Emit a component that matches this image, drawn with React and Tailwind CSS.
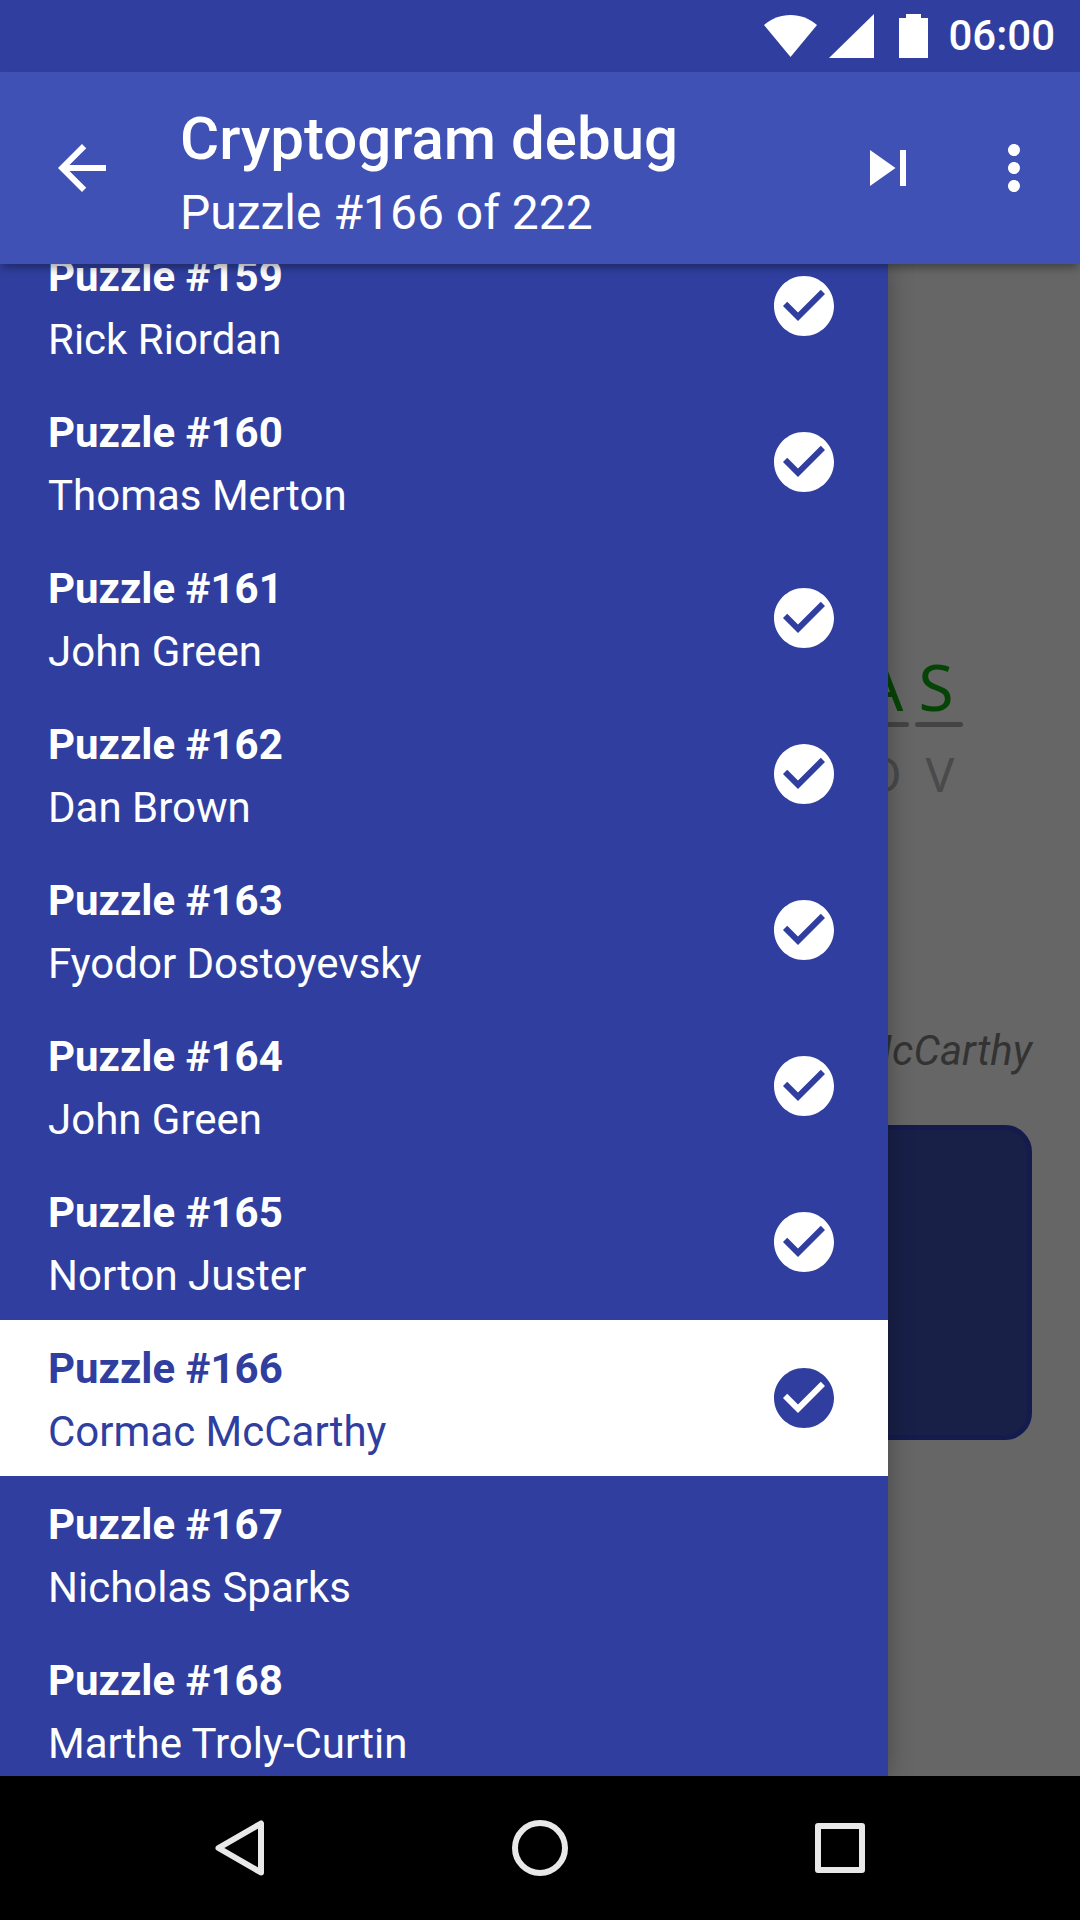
const puzzles = [
  { id: 159, author: 'Rick Riordan', done: true },
  { id: 160, author: 'Thomas Merton', done: true },
  { id: 161, author: 'John Green', done: true },
  { id: 162, author: 'Dan Brown', done: true },
  { id: 163, author: 'Fyodor Dostoyevsky', done: true },
  { id: 164, author: 'John Green', done: true },
  { id: 165, author: 'Norton Juster', done: true },
  { id: 166, author: 'Cormac McCarthy', done: true, active: true },
  { id: 167, author: 'Nicholas Sparks' },
  { id: 168, author: 'Marthe Troly-Curtin' },
];

function Icon({ d, className = 'h-[72px] w-[72px] shrink-0 fill-white' }) {
  return (
    <svg viewBox="0 0 24 24" className={className}>
      <path d={d} />
    </svg>
  );
}

function StatusBar() {
  return (
    <div className="flex h-[72px] shrink-0 items-center justify-end bg-[#303f9f] pr-[25px] text-white">
      <svg viewBox="0 0 53 42" className="h-[42px] w-[53px] fill-white">
        <path d="M26.5 42 0 10C7.5 3.6 16.5 0 26.5 0S45.5 3.6 53 10z" />
      </svg>
      <svg viewBox="0 0 45 44" className="ml-[12px] h-[44px] w-[45px] fill-white">
        <path d="M0 44 45 0v44z" />
      </svg>
      <svg viewBox="0 0 29 44" className="ml-[25px] h-[44px] w-[29px] fill-white">
        <path d="M7 0h15v4h7v40H0V4h7z" />
      </svg>
      <span className="ml-[20px] text-[42px] font-medium leading-none">06:00</span>
    </div>
  );
}

function AppBar() {
  return (
    <div className="relative z-20 flex h-[192px] shrink-0 items-center bg-[#3f51b5] pl-[46px] pr-[30px] text-white shadow-[0_6px_8px_-2px_rgba(0,0,0,0.35)]">
      <Icon d="M20 11H7.83l5.59-5.59L12 4l-8 8 8 8 1.41-1.41L7.83 13H20v-2z" />
      <div className="ml-[62px] mt-[14px] flex-1">
        <div className="text-[60px] font-medium leading-[70px]">Cryptogram debug</div>
        <div className="mt-[6px] text-[48px] leading-[66px]">Puzzle #166 of 222</div>
      </div>
      <Icon d="M6 18l8.5-6L6 6v12zM16 6v12h2V6h-2z" />
      <Icon
        className="ml-[54px] h-[72px] w-[72px] shrink-0 fill-white"
        d="M12 8c1.1 0 2-.9 2-2s-.9-2-2-2-2 .9-2 2 .9 2 2 2zm0 2c-1.1 0-2 .9-2 2s.9 2 2 2 2-.9 2-2-.9-2-2-2zm0 6c-1.1 0-2 .9-2 2s.9 2 2 2 2-.9 2-2-.9-2-2-2z"
      />
    </div>
  );
}

function PuzzleRow({ puzzle }) {
  const { id, author, done, active } = puzzle;
  return (
    <div
      className={
        active
          ? 'flex h-[156px] shrink-0 items-center bg-white pl-[48px] pr-[48px] text-[#303f9f]'
          : 'flex h-[156px] shrink-0 items-center pl-[48px] pr-[48px] text-white'
      }
    >
      <div className="mt-[3px] flex-1">
        <div className="text-[42px] font-bold leading-[63px]">Puzzle #{id}</div>
        <div className="text-[42px] leading-[63px]">{author}</div>
      </div>
      {done && (
        <Icon
          className={active ? 'h-[72px] w-[72px] fill-[#303f9f]' : 'h-[72px] w-[72px] fill-white'}
          d="M12 2C6.48 2 2 6.48 2 12s4.48 10 10 10 10-4.48 10-10S17.52 2 12 2zm-2 15l-5-5 1.41-1.41L10 14.17l7.59-7.59L19 8l-9 9z"
        />
      )}
    </div>
  );
}

function Drawer() {
  return (
    <div className="relative z-10 w-[888px] shrink-0 overflow-hidden bg-[#303f9f] shadow-[0_0_24px_rgba(0,0,0,0.3)]">
      <div className="-mt-[36px] flex flex-col">
        {puzzles.map((p) => (
          <PuzzleRow key={p.id} puzzle={p} />
        ))}
      </div>
    </div>
  );
}

// what is left of the game screen behind the drawer
function DimmedGame() {
  return (
    <div className="flex min-w-0 flex-1 flex-col items-end overflow-hidden bg-[#666666]">
      <div className="mt-[388px] flex h-[70px] justify-end gap-[6px] pr-[117px] font-['Noto_Sans',sans-serif] text-[64px] leading-[70px] text-[#064406]">
        <div className="w-[52px] text-center">A</div>
        <div className="w-[48px] pr-[6px] text-center">S</div>
      </div>
      <div className="flex justify-end gap-[6px] pr-[117px]">
        <div className="h-[5px] w-[52px] rounded-full bg-[#444444]" />
        <div className="h-[5px] w-[48px] rounded-full bg-[#444444]" />
      </div>
      <div className="mt-[18px] flex justify-end gap-[6px] pr-[117px] font-['Noto_Sans',sans-serif] text-[48px] leading-[58px] text-[#4a4a4a]">
        <div className="w-[52px] text-center">O</div>
        <div className="w-[48px] pl-[2px] text-center">V</div>
      </div>
      <div className="mt-[220px] whitespace-nowrap pr-[48px] text-[42px] italic leading-[56px] text-[#333333]">
        Cormac McCarthy
      </div>
      <div className="mt-[46px] mr-[48px] h-[315px] w-[800px] shrink-0 rounded-[27px] border-[5px] border-[#141b4d] bg-[#182048]" />
    </div>
  );
}

function NavBar() {
  return (
    <div className="grid h-[144px] shrink-0 grid-cols-3 items-center justify-items-center bg-black px-[90px]">
      <svg viewBox="0 0 50 56" className="h-[56px] w-[50px] fill-none stroke-[#e8e8e8] stroke-[6px]">
        <path strokeLinejoin="round" d="M3.5 28 46 3.5v49z" />
      </svg>
      <div className="h-[56px] w-[56px] rounded-full border-[6px] border-[#e8e8e8]" />
      <div className="h-[50px] w-[50px] rounded-[3px] border-[6px] border-[#e8e8e8]" />
    </div>
  );
}

export default function App() {
  return (
    <div className="flex h-[1920px] w-[1080px] flex-col overflow-hidden bg-black font-['Roboto',sans-serif]">
      <StatusBar />
      <AppBar />
      <div className="flex min-h-0 flex-1 overflow-hidden">
        <Drawer />
        <DimmedGame />
      </div>
      <NavBar />
    </div>
  );
}
